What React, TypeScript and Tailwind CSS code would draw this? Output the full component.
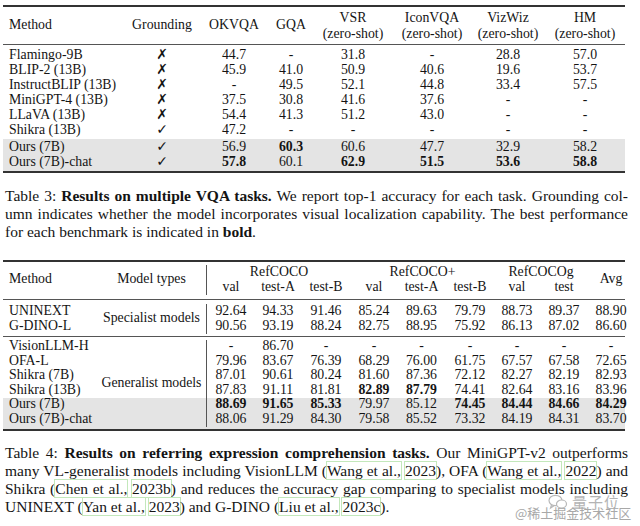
import React from "react";

const ROW = ["row-start-1", "row-start-2", "row-start-3", "row-start-4", "row-start-5", "row-start-6"];
const COL = ["col-start-1", "col-start-2", "col-start-3", "col-start-4", "col-start-5", "col-start-6", "col-start-7", "col-start-8", "col-start-9", "col-start-10", "col-start-11"];

type Cell = string | { v: string; b: true };

const T3_COLS = "grid grid-cols-[122px_74px_70px_44px_80px_78px_74px_80px]";

const t3Rows: { name: string; g: "x" | "c"; vals: Cell[] }[] = [
  { name: "Flamingo-9B", g: "x", vals: ["44.7", "-", "31.8", "-", "28.8", "57.0"] },
  { name: "BLIP-2 (13B)", g: "x", vals: ["45.9", "41.0", "50.9", "40.6", "19.6", "53.7"] },
  { name: "InstructBLIP (13B)", g: "x", vals: ["-", "49.5", "52.1", "44.8", "33.4", "57.5"] },
  { name: "MiniGPT-4 (13B)", g: "x", vals: ["37.5", "30.8", "41.6", "37.6", "-", "-"] },
  { name: "LLaVA (13B)", g: "x", vals: ["54.4", "41.3", "51.2", "43.0", "-", "-"] },
  { name: "Shikra (13B)", g: "c", vals: ["47.2", "-", "-", "-", "-", "-"] },
];
const t3Gray: { name: string; g: "x" | "c"; vals: Cell[] }[] = [
  { name: "Ours (7B)", g: "c", vals: ["56.9", { v: "60.3", b: true }, "60.6", "47.7", "32.9", "58.2"] },
  {
    name: "Ours (7B)-chat",
    g: "c",
    vals: [{ v: "57.8", b: true }, "60.1", { v: "62.9", b: true }, { v: "51.5", b: true }, { v: "53.6", b: true }, { v: "58.8", b: true }],
  },
];

function V({ c }: { c: Cell }) {
  if (typeof c === "string") return <span>{c}</span>;
  return <span className="font-bold">{c.v}</span>;
}

function Mark({ g }: { g: "x" | "c" }) {
  return (
    <span className="font-['DejaVu_Sans',sans-serif] text-[14px] font-bold italic">{g === "x" ? "✗" : "✓"}</span>
  );
}

function T3Row({ r }: { r: { name: string; g: "x" | "c"; vals: Cell[] } }) {
  return (
    <div className={`${T3_COLS} h-[15px] items-center leading-[15px]`}>
      <div className="pl-[6px] whitespace-nowrap">{r.name}</div>
      <div className="text-center">
        <Mark g={r.g} />
      </div>
      {r.vals.map((c, i) => (
        <div key={i} className="text-center">
          <V c={c} />
        </div>
      ))}
    </div>
  );
}

function Zs({ top }: { top: string }) {
  return (
    <div className="flex flex-col items-center leading-[16px]">
      <span>{top}</span>
      <span>(zero-shot)</span>
    </div>
  );
}

const T4_COLS = "grid grid-cols-[94px_110px_48px_46px_50px_46px_49px_48px_46px_48px_37px]";

const sec1: { name: string; vals: Cell[] }[] = [
  { name: "UNINEXT", vals: ["92.64", "94.33", "91.46", "85.24", "89.63", "79.79", "88.73", "89.37", "88.90"] },
  { name: "G-DINO-L", vals: ["90.56", "93.19", "88.24", "82.75", "88.95", "75.92", "86.13", "87.02", "86.60"] },
];
const B = (v: string): Cell => ({ v, b: true });
const sec2: { name: string; vals: Cell[] }[] = [
  { name: "VisionLLM-H", vals: ["-", "86.70", "-", "-", "-", "-", "-", "-", "-"] },
  { name: "OFA-L", vals: ["79.96", "83.67", "76.39", "68.29", "76.00", "61.75", "67.57", "67.58", "72.65"] },
  { name: "Shikra (7B)", vals: ["87.01", "90.61", "80.24", "81.60", "87.36", "72.12", "82.27", "82.19", "82.93"] },
  { name: "Shikra (13B)", vals: ["87.83", "91.11", "81.81", B("82.89"), B("87.79"), "74.41", "82.64", "83.16", "83.96"] },
  { name: "Ours (7B)", vals: [B("88.69"), B("91.65"), B("85.33"), "79.97", "85.12", B("74.45"), B("84.44"), B("84.66"), B("84.29")] },
  { name: "Ours (7B)-chat", vals: ["88.06", "91.29", "84.30", "79.58", "85.52", "73.32", "84.19", "84.31", "83.70"] },
];

function T4Cells({ rows }: { rows: { name: string; vals: Cell[] }[] }) {
  return (
    <>
      {rows.map((r, ri) => (
        <React.Fragment key={ri}>
          <div className={`${ROW[ri]} col-start-1 pl-[6px] whitespace-nowrap flex items-center`}>{r.name}</div>
          {r.vals.map((c, ci) => (
            <div
              key={ci}
              className={`${ROW[ri]} ${COL[ci + 2]} flex items-center justify-center whitespace-nowrap ${ci === 8 ? "pl-[9px]" : ""}`}
            >
              <V c={c} />
            </div>
          ))}
        </React.Fragment>
      ))}
    </>
  );
}

function L({ children }: { children: React.ReactNode }) {
  return <span className="ring-1 ring-[#c3e8bb]">{children}</span>;
}

function Line({ children, last }: { children: React.ReactNode; last?: boolean }) {
  return (
    <div className={`whitespace-nowrap ${last ? "text-left" : "text-justify [text-align-last:justify]"}`}>
      {children}
    </div>
  );
}

export default function App() {
  return (
    <div className="relative w-[640px] h-[526px] overflow-hidden bg-white font-['Liberation_Serif',serif] text-[#141414]">
      {/* Table 3 */}
      <div className="ml-[3px] w-[622px] pt-[5px] text-[13.8px]">
        <div className="h-[2px] bg-[#333]" />
        <div className={`${T3_COLS} h-[37px] items-center`}>
          <div className="pl-[6px]">Method</div>
          <div className="text-center">Grounding</div>
          <div className="text-center">OKVQA</div>
          <div className="text-center">GQA</div>
          <Zs top="VSR" />
          <Zs top="IconVQA" />
          <Zs top="VizWiz" />
          <Zs top="HM" />
        </div>
        <div className="h-px bg-[#555]" />
        <div className="pt-[2px]">
          {t3Rows.map((r, i) => (
            <T3Row key={i} r={r} />
          ))}
        </div>
        <div className="mt-[2px] bg-[#e4e4e4] pb-[2px]">
          {t3Gray.map((r, i) => (
            <T3Row key={i} r={r} />
          ))}
        </div>
        <div className="h-[2px] bg-[#333]" />
      </div>

      {/* Caption 3 */}
      <div className="ml-[5px] mt-[14px] w-[623px] text-[15.5px] leading-[18px]">
        <Line>
          Table 3: <span className="font-bold">Results on multiple VQA tasks.</span> We report top-1 accuracy for each
          task. Grounding col-
        </Line>
        <Line>
          umn indicates whether the model incorporates visual localization capability. The best performance
        </Line>
        <Line last>
          for each benchmark is indicated in <span className="font-bold">bold</span>.
        </Line>
      </div>

      {/* Table 4 */}
      <div className="ml-[3px] mt-[19px] w-[622px] text-[13.8px]">
        <div className="h-[2px] bg-[#333]" />
        <div className={`${T4_COLS} grid-rows-[15px_15px] pt-[2.5px] pb-[4.5px]`}>
          <div className="row-start-1 row-span-2 col-start-1 pl-[6px] flex items-center">Method</div>
          <div className="row-start-1 row-span-2 col-start-2 flex items-center justify-center border-r border-[#555]">
            Model types
          </div>
          <div className="row-start-1 col-start-3 col-span-3 flex items-center justify-center">RefCOCO</div>
          <div className="row-start-1 col-start-6 col-span-3 flex items-center justify-center">RefCOCO+</div>
          <div className="row-start-1 col-start-9 col-span-2 flex items-center justify-center">RefCOCOg</div>
          <div className="row-start-1 row-span-2 col-start-11 pl-[9px] flex items-center justify-center">Avg</div>
          <div className="row-start-2 col-start-3 flex items-center justify-center">val</div>
          <div className="row-start-2 col-start-4 flex items-center justify-center">test-A</div>
          <div className="row-start-2 col-start-5 flex items-center justify-center">test-B</div>
          <div className="row-start-2 col-start-6 flex items-center justify-center">val</div>
          <div className="row-start-2 col-start-7 flex items-center justify-center">test-A</div>
          <div className="row-start-2 col-start-8 flex items-center justify-center">test-B</div>
          <div className="row-start-2 col-start-9 flex items-center justify-center">val</div>
          <div className="row-start-2 col-start-10 flex items-center justify-center">test</div>
        </div>
        <div className="h-px bg-[#555]" />
        <div className={`${T4_COLS} grid-rows-[15px_15px] pt-[3.5px] pb-[2.5px]`}>
          <div className="row-start-1 row-span-2 col-start-2 flex items-center justify-center whitespace-nowrap border-r border-[#555]">
            Specialist models
          </div>
          <T4Cells rows={sec1} />
        </div>
        <div className="h-px bg-[#555]" />
        <div className={`${T4_COLS} grid-rows-[repeat(6,14.5px)_2px] pt-[2.5px]`}>
          <div className="row-start-5 row-span-3 col-start-1 col-span-11 bg-[#e4e4e4]" />
          <div className="row-start-1 row-span-6 col-start-2 flex items-center justify-center whitespace-nowrap border-r border-[#555]">
            Generalist models
          </div>
          <T4Cells rows={sec2} />
        </div>
        <div className="h-[2px] bg-[#333]" />
      </div>

      {/* Caption 4 */}
      <div className="ml-[5px] mt-[13.5px] w-[623px] text-[15.5px] leading-[18px]">
        <Line>
          Table 4: <span className="font-bold">Results on referring expression comprehension tasks.</span> Our
          MiniGPT-v2 outperforms
        </Line>
        <Line>
          many VL-generalist models including VisionLLM (<L>Wang et al.,</L> <L>2023</L>), OFA (<L>Wang et al.,</L>{" "}
          <L>2022</L>) and
        </Line>
        <Line>
          Shikra (<L>Chen et al.,</L> <L>2023b</L>) and reduces the accuracy gap comparing to specialist models including
        </Line>
        <Line last>
          UNINEXT (<L>Yan et al.,</L> <L>2023</L>) and G-DINO (<L>Liu et al.,</L> <L>2023c</L>).
        </Line>
      </div>

      {/* Watermark */}
      <div className="absolute left-[548px] top-[494px] flex items-center gap-[4px] text-[#b4b4b4]">
        <svg width="20" height="16" viewBox="0 0 20 16" fill="none" stroke="#b8b8b8" strokeWidth="1.2">
          <ellipse cx="7.5" cy="6.5" rx="6.5" ry="5.2" />
          <ellipse cx="13.5" cy="10" rx="5" ry="4" fill="white" />
          <path d="M3.5 11 L2.5 14 L6 11.8" />
        </svg>
        <span className="font-['Noto_Sans_CJK_SC',sans-serif] text-[15px] leading-[16px] tracking-[1px]">量子位</span>
      </div>
      <div className="absolute left-[515px] top-[505px] font-['Noto_Sans_CJK_SC',sans-serif] text-[13px] leading-[16px] text-[#a8a8a8]">
        @稀土掘金技术社区
      </div>
    </div>
  );
}
